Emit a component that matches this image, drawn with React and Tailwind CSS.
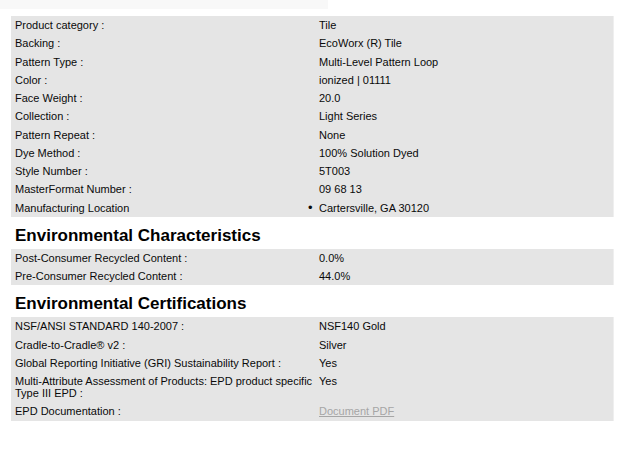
export default function App() {
  const t1 = [
    ["Product category :", "Tile"],
    ["Backing :", "EcoWorx (R) Tile"],
    ["Pattern Type :", "Multi-Level Pattern Loop"],
    ["Color :", "ionized | 01111"],
    ["Face Weight :", "20.0"],
    ["Collection :", "Light Series"],
    ["Pattern Repeat :", "None"],
    ["Dye Method :", "100% Solution Dyed"],
    ["Style Number :", "5T003"],
    ["MasterFormat Number :", "09 68 13"],
  ];
  const t2 = [
    ["Post-Consumer Recycled Content :", "0.0%"],
    ["Pre-Consumer Recycled Content :", "44.0%"],
  ];
  const t3 = [
    ["NSF/ANSI STANDARD 140-2007 :", "NSF140 Gold"],
    ["Cradle-to-Cradle® v2 :", "Silver"],
    ["Global Reporting Initiative (GRI) Sustainability Report :", "Yes"],
    ["Multi-Attribute Assessment of Products: EPD product specific Type III EPD :", "Yes"],
  ];
  const Row = ({ l, v }) => (
    <div className="flex">
      <div className="w-[304px] shrink-0 pl-[4px] pr-0 py-[3.135px]">{l}</div>
      <div className="flex-1 px-[4px] py-[3.135px]">{v}</div>
    </div>
  );
  return (
    <div className="w-[629px] h-[450px] bg-white text-[11px] leading-[12px] text-[#0a0a0a]" style={{ fontFamily: '"Liberation Sans", Arial, sans-serif' }}>
      <div className="h-[9px] w-[328px] bg-[#f8f8f8]" />
      <div className="px-[11px] pt-[7px]">
        <div className="w-[603px] bg-[#e5e5e5] border-r border-[#efefef]">
          {t1.map(([l, v]) => (
            <Row key={l} l={l} v={v} />
          ))}
          <Row
            l="Manufacturing Location"
            v={
              <span>
                <span className="inline-block w-[11px] -ml-[11px] text-[13px] leading-[12px]">•</span>
                Cartersville, GA 30120
              </span>
            }
          />
        </div>
        <h2 className="pt-[8px] pb-[3px] px-[4px] text-[17px] leading-[21px] font-bold text-black">Environmental Characteristics</h2>
        <div className="w-[603px] bg-[#e5e5e5] border-r border-[#efefef]">
          {t2.map(([l, v]) => (
            <Row key={l} l={l} v={v} />
          ))}
        </div>
        <h2 className="pt-[8px] pb-[3px] px-[4px] text-[17px] leading-[21px] font-bold text-black">Environmental Certifications</h2>
        <div className="w-[603px] bg-[#e5e5e5] border-r border-[#efefef]">
          {t3.map(([l, v]) => (
            <Row key={l} l={l} v={v} />
          ))}
          <Row l="EPD Documentation :" v={<a className="text-[#a6a6a6] underline">Document PDF</a>} />
        </div>
      </div>
    </div>
  );
}
